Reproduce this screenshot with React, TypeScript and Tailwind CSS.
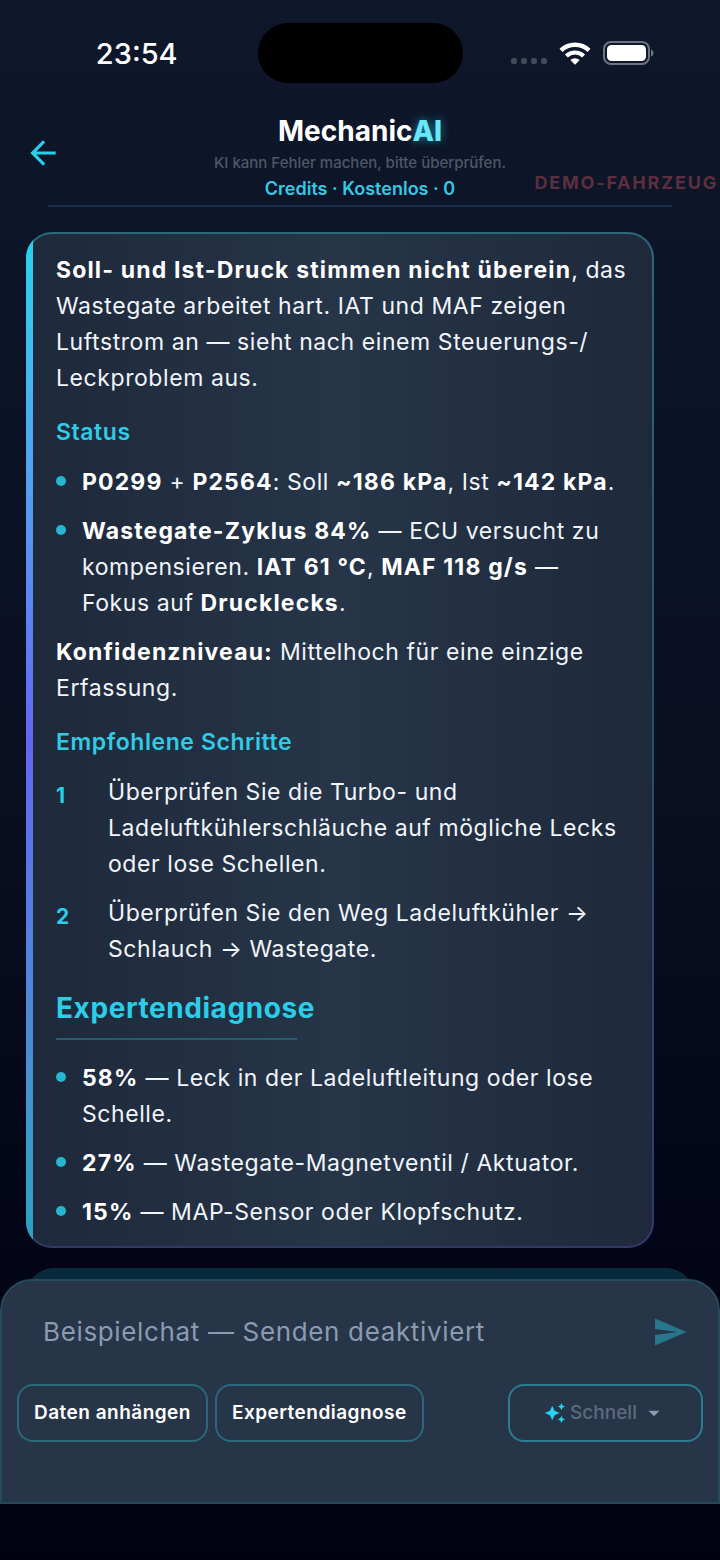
import React from "react";
import { MdArrowBack, MdArrowDropDown, MdSend, MdAutoAwesome } from "react-icons/md";

interface BulletProps {
  children: React.ReactNode;
}

interface StepProps {
  number: number;
  children: React.ReactNode;
}

const StatusBar: React.FC = () => {
  return (
    <div className="grid grid-cols-[1fr_auto_1fr] items-center pt-[23px]">
      <div className="pt-0.5 pl-4 text-center text-[29px] font-medium">23:54</div>
      <div className="h-[60px] w-[205px] rounded-full bg-black" />
      <div className="flex items-center justify-center gap-3 pr-[18px]">
        <div className="flex gap-1 pt-4">
          <span className="size-[6px] rounded-xs bg-[#434959]" />
          <span className="size-[6px] rounded-xs bg-[#434959]" />
          <span className="size-[6px] rounded-xs bg-[#434959]" />
          <span className="size-[6px] rounded-xs bg-[#434959]" />
        </div>
        <svg className="h-[23px] w-8" viewBox="0 0 32 23" fill="none" aria-hidden="true">
          <path d="M2 8.4a20 20 0 0 1 28 0" stroke="white" strokeWidth="4.4" />
          <path d="M7.4 14a12.3 12.3 0 0 1 17.2 0" stroke="white" strokeWidth="4.2" />
          <path d="M16 22.8l-4.7-4.7a6.8 6.8 0 0 1 9.4 0z" fill="white" />
        </svg>
        <svg className="h-6 w-[51px]" viewBox="0 0 51 24" fill="none" aria-hidden="true">
          <rect x="1" y="1" width="45" height="22" rx="7" stroke="#6d7381" strokeWidth="2" />
          <rect x="4" y="4" width="39" height="16" rx="4.5" fill="white" />
          <path d="M48 8.5c3.4 1 3.4 6 0 7z" fill="#6d7381" />
        </svg>
      </div>
    </div>
  );
};

const Header: React.FC = () => {
  return (
    <header>
      <div className="grid grid-cols-[1fr_auto_1fr] pt-8">
        <button type="button" aria-label="Zurück" className="ml-6 self-center justify-self-start pb-3">
          <MdArrowBack className="size-[38px] text-[#27d0ea]" />
        </button>
        <div className="text-center">
          <h1 className="text-[28px] leading-8 font-bold">
            Mechanic
            <span className="font-extrabold text-[#67e8f9] [text-shadow:0_0_10px_rgba(34,211,238,0.6)]">AI</span>
          </h1>
          <p className="pt-1 text-[15px] leading-6 font-medium text-[#4e5768]">
            KI kann Fehler machen, bitte überprüfen.
          </p>
          <p className="text-lg leading-7 font-semibold text-[#35c9e3]">Credits · Kostenlos · 0</p>
        </div>
        <div className="mr-0.5 self-end justify-self-end pb-2 text-lg leading-6 font-bold tracking-widest text-[#5b2f3e]">
          DEMO-FAHRZEUG
        </div>
      </div>
      <div className="mx-12 mt-0.5 h-0.5 bg-[#18314a]" />
    </header>
  );
};

const Bullet: React.FC<BulletProps> = ({ children }) => {
  return (
    <li className="flex gap-4">
      <span className="mt-3 size-[10px] shrink-0 rounded-full bg-[#26b6d0]" />
      <div>{children}</div>
    </li>
  );
};

const Step: React.FC<StepProps> = ({ number, children }) => {
  return (
    <li className="flex">
      <span className="w-[52px] shrink-0 pt-1 text-[21px] font-bold text-[#27cfe9]">{number}</span>
      <div>{children}</div>
    </li>
  );
};

const Answer: React.FC = () => {
  return (
    <article className="relative mt-[25px] mr-[66px] ml-[26px] overflow-hidden rounded-[26px] bg-linear-to-b from-[#28697b] via-[#27506b] to-[#33386b] p-0.5">
      <div className="absolute inset-y-0 left-0 w-[7px] bg-linear-to-b from-[#22d3ee] via-[#6366f1] to-[#2aa2c0]" />
      <div className="rounded-3xl bg-linear-to-r from-[#1e293b] via-[#263548] to-[#1e293b] pt-[18px] pr-4 pb-4 pl-7 text-[23px] leading-9 tracking-wide text-[#f1f5f9] [&_b]:tracking-wider [&_b]:text-white">
        <p>
          <b>Soll- und Ist-Druck stimmen nicht überein</b>, das Wastegate arbeitet hart. IAT und MAF zeigen Luftstrom an
          — sieht nach einem Steuerungs-/
          <wbr />
          Leckproblem aus.
        </p>
        <h3 className="pt-[18px] pb-[14px] font-semibold text-[#31cbe5]">Status</h3>
        <ul className="flex flex-col gap-[13px]">
          <Bullet>
            <b>P0299</b> + <b>P2564</b>: Soll <b>~186 kPa</b>, Ist <b>~142 kPa</b>.
          </Bullet>
          <Bullet>
            <b>Wastegate-Zyklus 84%</b> — ECU versucht zu kompensieren. <b>IAT 61 °C</b>, <b>MAF 118 g/s</b> —
            Fokus&nbsp;auf <b>Drucklecks</b>.
          </Bullet>
        </ul>
        <p className="pt-[13px]">
          <b>Konfidenzniveau:</b> Mittelhoch für eine einzige Erfassung.
        </p>
        <h3 className="pt-[18px] pb-[14px] font-semibold text-[#31cbe5]">Empfohlene Schritte</h3>
        <ol className="flex flex-col gap-[13px]">
          <Step number={1}>Überprüfen Sie die Turbo- und Ladeluftkühlerschläuche auf mögliche Lecks oder lose Schellen.</Step>
          <Step number={2}>Überprüfen Sie den Weg Ladeluftkühler → Schlauch → Wastegate.</Step>
        </ol>
        <h2 className="pt-[25px] text-[28px] leading-8 font-bold text-[#2bcde8]">Expertendiagnose</h2>
        <div className="mt-[14px] mb-5 h-0.5 w-[241px] bg-[#255d70]" />
        <ul className="flex flex-col gap-[13px]">
          <Bullet>
            <b>58%</b> — Leck in der Ladeluftleitung oder lose Schelle.
          </Bullet>
          <Bullet>
            <b>27%</b> — Wastegate-Magnetventil / Aktuator.
          </Bullet>
          <Bullet>
            <b>15%</b> — MAP-Sensor oder Klopfschutz.
          </Bullet>
        </ul>
      </div>
    </article>
  );
};

const Composer: React.FC = () => {
  return (
    <form className="relative -mt-[21px] rounded-t-[32px] border-2 border-[#27495c] bg-[#273548] px-[15px] pt-[25px] pb-15">
      <div className="flex items-center pr-[15px] pl-[26px]">
        <input
          type="text"
          disabled
          aria-label="Nachricht"
          placeholder="Beispielchat — Senden deaktiviert"
          className="min-w-0 flex-1 text-[26px] leading-[52px] tracking-wide placeholder:text-[#8b9bb1]"
        />
        <button type="button" disabled aria-label="Senden">
          <MdSend className="size-9 text-[#27768b]" />
        </button>
      </div>
      <div className="flex gap-[7px] pt-[26px] text-[19px] font-semibold text-white">
        <button type="button" className="h-[58px] rounded-2xl border-2 border-[#2a687c] px-[15px] tracking-wide">
          Daten anhängen
        </button>
        <button type="button" className="h-[58px] rounded-2xl border-2 border-[#2a687c] px-[15px] tracking-wide">
          Expertendiagnose
        </button>
        <label className="ml-auto flex h-[58px] w-[195px] items-center justify-center rounded-2xl border-2 border-[#2c7d92] font-medium">
          <MdAutoAwesome className="mr-1 size-[22px] text-[#27d3ee]" />
          <select
            disabled
            aria-label="Modus"
            className="field-sizing-content appearance-none text-[#5d6a7f] opacity-100"
          >
            <option>Schnell</option>
          </select>
          <MdArrowDropDown className="ml-1 size-[26px] text-[#8c9bb0]" />
        </label>
      </div>
    </form>
  );
};

const App: React.FC = () => {
  return (
    <main className="flex min-h-screen flex-col bg-linear-to-b from-[#0f172a] via-[#0a0f22] to-[#01020f] font-['Inter',sans-serif] text-white">
      <StatusBar />
      <Header />
      <Answer />
      <div className="mx-[26px] mt-5 h-8 rounded-t-[28px] bg-[#082a3b]" />
      <Composer />
      <div className="h-14" />
    </main>
  );
};

export default App;
